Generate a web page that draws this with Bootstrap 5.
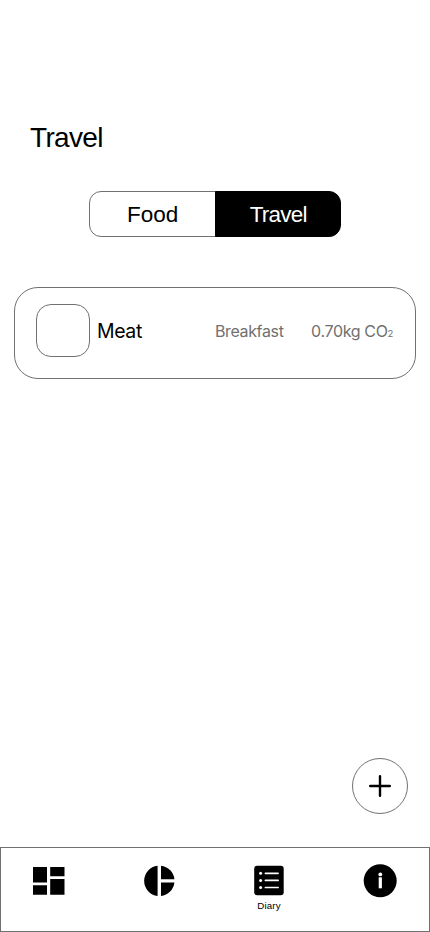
<!DOCTYPE html>
<html lang="en">
<head>
<meta charset="utf-8">
<meta name="viewport" content="width=device-width, initial-scale=1">
<title>Travel</title>
<link href="https://cdn.jsdelivr.net/npm/bootstrap@5.3.0/dist/css/bootstrap.min.css" rel="stylesheet">
<style>
:root { --line: #707070; }
body { font-family: "Liberation Sans", Arial, sans-serif; color: #000; background: #fff; }
.screen { height: 932px; }
.page-title { margin: 120px 0 0 30px; font-size: 28px; line-height: 36px; letter-spacing: -.65px; font-weight: 400; }
.switcher { margin-top: 35px; width: 252px; height: 46px; }
.switcher .btn { --bs-btn-border-color: var(--line); --bs-btn-color: #000; --bs-btn-bg: #fff; --bs-btn-active-bg: #000; --bs-btn-active-border-color: #000; --bs-btn-active-color: #fff; --bs-btn-border-radius: 12px; font-size: 22.5px; line-height: 44px; padding: 1px 0 0 1px; width: 126px; }
.switcher .btn.active { letter-spacing: -.75px; margin-left: 0; }
.entry { --bs-card-border-color: var(--line); --bs-card-border-radius: 24px; --bs-card-bg: #fff; margin: 50px 14px 0; height: 92px; padding: 16px 22px 0 21px; font-family: Inter, "Liberation Sans", sans-serif; }
.thumb { width: 54px; height: 53px; border: 1px solid var(--line); border-radius: 15px; margin-right: 7px; }
.food { font-size: 19.5px; letter-spacing: -.4px; padding-top: 2px; }
.meta { font-size: 16px; color: #707070; letter-spacing: -.35px; }
.meta small { font-size: 9.5px; }
.amount { margin-left: 27.5px; }
.fab { --bs-btn-border-color: var(--line); width: 56px; height: 56px; margin: 0 22px 33px auto; }
.tabs { height: 85px; border: 1px solid var(--line); }
.tab { width: 110px; padding: 16px 14px 0 0; color: #000; text-decoration: none; font-size: 9.7px; line-height: 14px; }
.tab svg { display: block; }
.tab-label { margin-top: 1px; letter-spacing: .2px; }
</style>
<script src="https://cdn.jsdelivr.net/npm/bootstrap@5.3.0/dist/js/bootstrap.bundle.min.js"></script>
</head>
<body>
<div class="screen d-flex flex-column overflow-hidden">
  <h1 class="page-title">Travel</h1>
  <div class="switcher btn-group align-self-center" role="group" aria-label="Category">
    <button type="button" class="btn">Food</button>
    <button type="button" class="btn active">Travel</button>
  </div>
  <div class="entry card">
    <div class="d-flex align-items-center">
      <div class="thumb flex-shrink-0"></div>
      <span class="food">Meat</span>
      <span class="meta ms-auto">Breakfast</span>
      <span class="meta amount">0.70kg CO<small>2</small></span>
    </div>
  </div>
  <button type="button" class="fab btn rounded-circle p-0 mt-auto d-flex align-items-center justify-content-center" aria-label="Add">
    <svg width="24" height="24" viewBox="0 0 24 24" fill="none" stroke="#000" stroke-width="2.4" stroke-linecap="round"><path d="M12 2.2v19.6M2.2 12h19.6"/></svg>
  </button>
  <nav class="tabs d-flex flex-shrink-0 overflow-hidden">
    <a class="tab flex-shrink-0 d-flex flex-column align-items-center" href="#" aria-label="Dashboard">
      <svg width="96" height="34" viewBox="1 864 96 34"><path d="M33 867h14v15.4H33zM50.2 867h14.3v9.3H50.2zM33 885.2h14v9.5H33zM50.2 879h14.3v15.7H50.2z"/></svg>
    </a>
    <a class="tab flex-shrink-0 d-flex flex-column align-items-center" href="#" aria-label="Statistics">
      <svg width="96" height="34" viewBox="111 864 96 34"><path d="M157.6 865.7v30.2a15.2 15.2 0 0 1 0-30.2zM161 865.7a15.2 15.2 0 0 1 13.4 13.5H161zM161 882.4h13.4A15.2 15.2 0 0 1 161 895.9z"/></svg>
    </a>
    <a class="tab flex-shrink-0 d-flex flex-column align-items-center" href="#">
      <svg width="96" height="34" viewBox="221 864 96 34"><rect x="254.2" y="865.7" width="29.5" height="29.5" rx="3"/><path d="M265.4 873.3h12.7M265.4 880.4h12.7M265.4 887.5h12.7" stroke="#fff" stroke-width="1.7" stroke-linecap="round"/><g fill="#fff"><circle cx="260.6" cy="873.3" r="1.5"/><circle cx="260.6" cy="880.4" r="1.5"/><circle cx="260.6" cy="887.5" r="1.5"/></g></svg>
      <span class="tab-label">Diary</span>
    </a>
    <a class="tab flex-shrink-0 d-flex flex-column align-items-center" href="#" aria-label="Information">
      <svg width="96" height="34" viewBox="331 864 96 34"><circle cx="380.2" cy="880.8" r="16.5"/><circle cx="380.3" cy="874.4" r="1.9" fill="#fff"/><path d="M378.7 877.3h3.2v11h-3.2z" fill="#fff"/></svg>
    </a>
  </nav>
</div>
</body>
</html>
